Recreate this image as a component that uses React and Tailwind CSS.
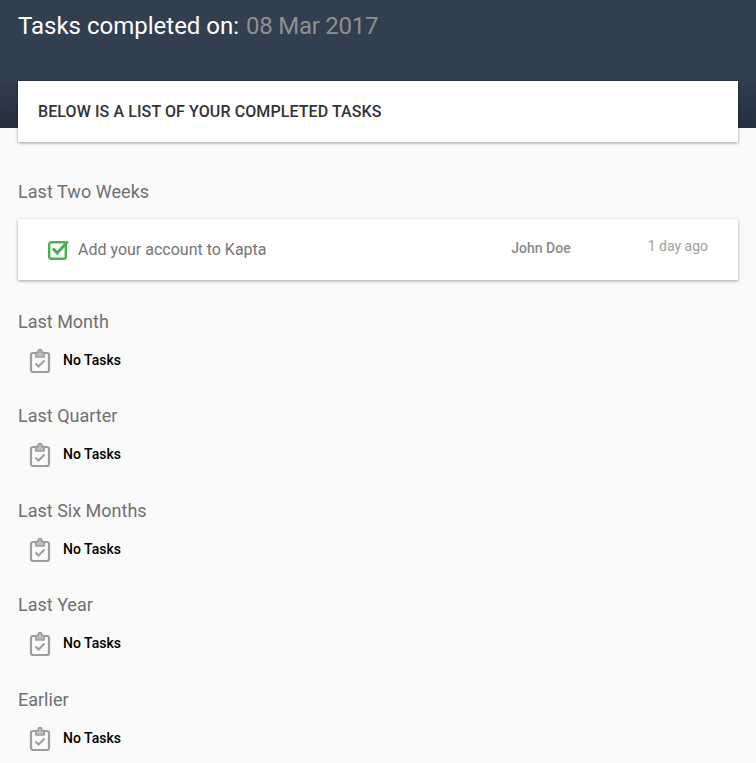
function ClipboardIcon() {
  return (
    <svg className="mt-[2px]" width="22" height="26" viewBox="0 0 22 26" fill="none" stroke="#9e9e9e" strokeWidth="2.2">
      <rect x="2" y="5" width="18" height="19" rx="2" />
      <path d="M6.8 9V4.6h2.4V3.4a1.8 1.8 0 0 1 3.6 0v1.2h2.4V9z" fill="#bdbdbd" strokeWidth="1.6" strokeLinejoin="round" />
      <path d="M6.5 15.5l3 3 6-6" strokeWidth="2" />
    </svg>
  );
}

function CheckedIcon() {
  return (
    <svg width="21" height="20" viewBox="0 0 21 20" fill="none">
      <rect x="1.2" y="2.2" width="16.6" height="16.6" rx="2" stroke="#4caf50" strokeWidth="2.4" />
      <path d="M5 8.5l4.2 4.5L19.8 1.5" stroke="#4caf50" strokeWidth="3" />
    </svg>
  );
}

function EmptySection({ title }) {
  return (
    <section className="h-[94.4px] pt-[12px]">
      <h2 className="text-[18px] leading-[24px] text-[#707070]">{title}</h2>
      <div className="flex items-center pl-[11px] mt-[13px] h-[26px]">
        <ClipboardIcon />
        <span className="ml-[12px] text-[14px] font-medium text-black mt-[1px]">No Tasks</span>
      </div>
    </section>
  );
}

export default function App() {
  const vacias = ["Last Month", "Last Quarter", "Last Six Months", "Last Year", "Earlier"];

  return (
    <div className="h-[763px] overflow-hidden bg-[#fafafa] font-['Roboto',sans-serif]">
      {/* Cabecera */}
      <header className="h-[128px] px-[18px] pt-[10px] bg-gradient-to-b from-[#323f50] from-60% to-[#252f3d]">
        <h1 className="text-[24px] leading-[32px] text-white">
          Tasks completed on: <span className="ml-[1px] tracking-[-0.25px] text-[#8f8f8f]">08 Mar 2017</span>
        </h1>
      </header>

      <main className="px-[18px]">
        <div className="-mt-[47px] h-[61px] flex items-center px-[20px] bg-white shadow-[0_1px_3px_rgba(0,0,0,0.4)]">
          <p className="mt-[1px] text-[16px] tracking-[0.1px] font-medium text-[#333333] uppercase">
            Below is a list of your completed tasks
          </p>
        </div>

        <h2 className="mt-[38px] text-[18px] leading-[24px] tracking-[0.05px] text-[#707070]">Last Two Weeks</h2>

        <div className="mt-[15px] h-[61px] flex items-center pl-[30px] pr-[30px] bg-white shadow-[0_1px_3px_rgba(0,0,0,0.35)]">
          <CheckedIcon />
          <span className="ml-[9px] mt-[1px] text-[16px] text-[#757575]">Add your account to Kapta</span>
          <span className="ml-auto text-[14px] font-medium text-[#8a8a8a] -mt-[3px]">John Doe</span>
          <span className="ml-[77px] text-[14px] text-[#a0a0a0] -mt-[7px]">1 day ago</span>
        </div>

        <div className="mt-[18px]">
          {vacias.map((titulo) => (
            <EmptySection key={titulo} title={titulo} />
          ))}
        </div>
      </main>
    </div>
  );
}
